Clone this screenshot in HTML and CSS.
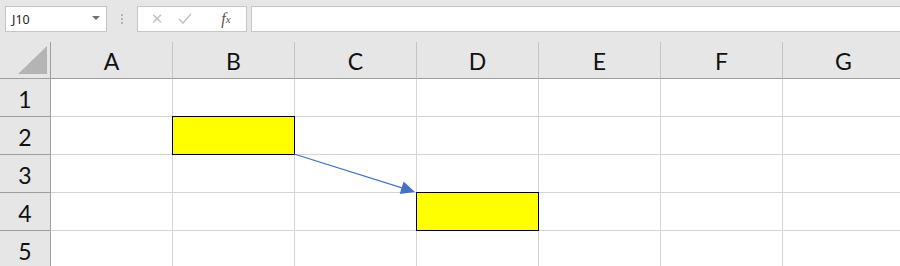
FILE: index.html
```html
<!DOCTYPE html>
<html>

<head>
	<title>Sheet</title>
	<link rel="stylesheet" href="styles.css">
</head>

<body>
	<!-- name box + formula bar -->
	<div class="toolbar">
		<div class="name-box">
			<span>J10</span>
			<span class="caret"></span>
		</div>
		<div class="grip"><i></i><i></i><i></i></div>
		<div class="fx-buttons">
			<span class="btn cancel">&#x2715;</span>
			<span class="btn enter">
				<svg width="14" height="12" viewBox="0 0 14 12"><path d="M1 6 L5 10 L13 1" fill="none" stroke="#c4c4c4" stroke-width="1.6"/></svg>
			</span>
			<span class="btn fx"><i>f</i><sub>x</sub></span>
		</div>
		<div class="formula"></div>
	</div>

	<!-- the grid -->
	<div class="sheet">
		<div class="grid">
			<div class="corner"><span class="tri"></span></div>
			<div class="col-head">A</div>
			<div class="col-head">B</div>
			<div class="col-head">C</div>
			<div class="col-head">D</div>
			<div class="col-head">E</div>
			<div class="col-head">F</div>
			<div class="col-head">G</div>

			<div class="row-head">1</div>
			<div class="cell"></div><div class="cell"></div><div class="cell"></div><div class="cell"></div><div class="cell"></div><div class="cell"></div><div class="cell"></div>

			<div class="row-head">2</div>
			<div class="cell"></div><div class="cell hl"></div><div class="cell"></div><div class="cell"></div><div class="cell"></div><div class="cell"></div><div class="cell"></div>

			<div class="row-head">3</div>
			<div class="cell"></div><div class="cell"></div><div class="cell"></div><div class="cell"></div><div class="cell"></div><div class="cell"></div><div class="cell"></div>

			<div class="row-head">4</div>
			<div class="cell"></div><div class="cell"></div><div class="cell"></div><div class="cell hl"></div><div class="cell"></div><div class="cell"></div><div class="cell"></div>

			<div class="row-head">5</div>
			<div class="cell"></div><div class="cell"></div><div class="cell"></div><div class="cell"></div><div class="cell"></div><div class="cell"></div><div class="cell"></div>
		</div>

		<!-- connector arrow from B2 to D4 -->
		<svg class="arrow" width="900" height="224" viewBox="0 0 900 224">
			<line x1="294" y1="112" x2="402" y2="145.8" stroke="#4472c4" stroke-width="1.3"/>
			<polygon points="415,150 399.7,152 403.6,139.6" fill="#4472c4"/>
		</svg>
	</div>
</body>

</html>
```

FILE: styles.css
```css
body {
	margin: 0;
	padding: 0;
	width: 900px;
	height: 266px;
	overflow: hidden;
	background-color: #e6e6e6;
	font-family: Lato, "Liberation Sans", sans-serif;
}

/* top bar */
.toolbar {
	height: 42px;
	box-sizing: border-box;
	padding: 6px 0 0 5px;
	display: flex;
	align-items: flex-start;
	overflow: hidden;
}

.name-box {
	width: 102px;
	height: 26px;
	box-sizing: border-box;
	border: 1px solid #c6c6c6;
	background-color: #fff;
	display: flex;
	align-items: center;
	justify-content: space-between;
	padding: 0 6px 0 6px;
	font-family: "Noto Sans", "Open Sans", sans-serif;
	font-size: 12.5px;
	color: #222;
}

.caret {
	width: 0;
	height: 0;
	border-left: 4px solid transparent;
	border-right: 4px solid transparent;
	border-top: 4px solid #707070;
	margin-top: -2px;
}

.grip {
	width: 30px;
	height: 26px;
	display: flex;
	flex-direction: column;
	align-items: center;
	justify-content: center;
	gap: 2px;
}

.grip i {
	width: 2px;
	height: 2px;
	background-color: #b4b4b4;
}

.fx-buttons {
	width: 110px;
	height: 26px;
	box-sizing: border-box;
	border: 1px solid #c6c6c6;
	background-color: #fff;
	display: flex;
	align-items: center;
	padding-left: 11px;
}

.btn {
	display: flex;
	justify-content: center;
	align-items: center;
	color: #c4c4c4;
}

.cancel {
	font-family: "DejaVu Sans", sans-serif;
	font-size: 15px;
	width: 16px;
	margin-right: 12px;
}

.enter {
	width: 16px;
	margin-right: 22px;
}

.fx {
	width: 22px;
	font-family: "Liberation Serif", serif;
	color: #555;
	font-size: 16px;
}

.fx sub {
	font-style: italic;
	font-size: 11px;
	vertical-align: -1px;
}

.formula {
	flex: 1;
	height: 26px;
	box-sizing: border-box;
	margin-left: 4px;
	margin-right: -10px;
	border: 1px solid #c6c6c6;
	background-color: #fff;
}

/* sheet */
.sheet {
	position: relative;
}

.grid {
	display: grid;
	grid-template-columns: 51px repeat(7, 122px);
	grid-template-rows: 37px repeat(5, 38px);
}

.grid > div {
	box-sizing: border-box;
}

.corner {
	border-right: 1px solid #9e9e9e;
	border-bottom: 1px solid #9e9e9e;
	position: relative;
}

.tri {
	position: absolute;
	right: 3px;
	bottom: 4px;
	width: 0;
	height: 0;
	border-left: 29px solid transparent;
	border-bottom: 28px solid #b4b4b4;
}

.col-head {
	border-right: 1px solid #c4c4c4;
	border-bottom: 1px solid #9e9e9e;
	display: flex;
	align-items: center;
	justify-content: center;
	font-size: 23px;
	color: #111;
	padding-top: 2px;
}

.row-head {
	border-right: 1px solid #9e9e9e;
	border-bottom: 1px solid #9e9e9e;
	display: flex;
	align-items: center;
	justify-content: center;
	font-size: 23px;
	color: #111;
	padding-top: 2px;
}

.cell {
	background-color: #fff;
	border-right: 1px solid #d4d4d4;
	border-bottom: 1px solid #d4d4d4;
}

.cell.hl {
	position: relative;
	background-color: #ffff00;
}

/* black frame laid over the grid lines */
.cell.hl::after {
	content: "";
	position: absolute;
	top: -1px;
	left: -1px;
	right: -1px;
	bottom: -1px;
	border: 1px solid #000;
}

.arrow {
	position: absolute;
	top: 0;
	left: 0;
	pointer-events: none;
}
```
